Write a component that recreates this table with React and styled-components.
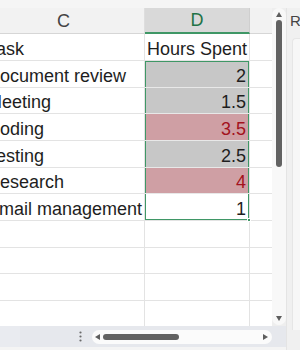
import React from "react";
import styled, { createGlobalStyle } from "styled-components";

const Global = createGlobalStyle`
  html, body { margin: 0; padding: 0; background: #ffffff; overflow: hidden; }
  * { box-sizing: border-box; }
`;

const FONT = `"Liberation Sans", Arial, sans-serif`;
const GRID = "#e3e3e3";
const GREEN = "#3f9766";

const Window = styled.div`
  width: 300px;
  height: 350px;
  display: flex;
  flex-direction: column;
  font-family: ${FONT};
  overflow: hidden;
  background: #f1f1f1;
`;

const TopStrip = styled.div`
  height: 8px;
  flex: none;
  background: #f5f5f5;
`;

const Body = styled.div`
  flex: 1;
  display: flex;
  min-height: 0;
`;

const Workspace = styled.div`
  width: 286px;
  flex: none;
  display: flex;
  flex-direction: column;
`;

const MainRow = styled.div`
  flex: 1;
  display: flex;
  min-height: 0;
`;

const Sheet = styled.div`
  width: 272px;
  flex: none;
  overflow: hidden;
  background: #ffffff;
`;

const Grid = styled.div`
  margin-left: -17px;
  display: grid;
  grid-template-columns: 162px 105px 120px;
  grid-auto-rows: auto;
`;

const HeaderCell = styled.div`
  height: 26px;
  display: flex;
  align-items: center;
  justify-content: center;
  font-size: 18px;
  line-height: 18px;
  color: ${(p) => (p.$active ? "#217346" : "#444444")};
  background: ${(p) => (p.$active ? "#d9d9d9" : "#f2f2f2")};
  border-right: 1px solid ${(p) => (p.$active ? "#cfcfcf" : "#dedede")};
  border-bottom: ${(p) => (p.$active ? `2px solid ${GREEN}` : "1px solid #d6d6d6")};
`;

const Cell = styled.div`
  position: relative;
  height: ${(p) => p.$h}px;
  display: flex;
  align-items: flex-end;
  justify-content: ${(p) => (p.$num ? "flex-end" : "flex-start")};
  padding: 0 3px 2px ${(p) => (p.$tight ? 2 : 4)}px;
  font-size: 18px;
  line-height: 18px;
  white-space: nowrap;
  color: ${(p) => (p.$red ? "#a3121d" : "#1e1e1e")};
  background: ${(p) => p.$fill || "#ffffff"};
  border-right: 1px solid ${GRID};
  border-bottom: 1px solid ${(p) => (p.$fill ? "#e8e8e8" : GRID)};
  box-shadow: ${(p) =>
    p.$sel
      ? [
          `inset 1px 0 0 ${GREEN}`,
          `inset -1px 0 0 ${GREEN}`,
          p.$selTop ? `inset 0 1px 0 ${GREEN}` : null,
          p.$selBottom ? `inset 0 -1px 0 ${GREEN}` : null,
        ]
          .filter(Boolean)
          .join(", ")
      : "none"};
`;

const FillHandle = styled.span`
  position: absolute;
  right: -2px;
  bottom: -2px;
  width: 4px;
  height: 4px;
  background: ${GREEN};
  border: 1px solid #ffffff;
  z-index: 2;
`;

const VScroll = styled.div`
  width: 14px;
  flex: none;
  background: #eeeeee;
  display: flex;
  padding-bottom: 1px;
`;

const VTrack = styled.div`
  flex: 1;
  background: #f8f8f8;
  border-radius: 7px;
  display: flex;
  flex-direction: column;
  align-items: center;
  padding: 4px 0 4px;
  gap: 3px;
`;

const VThumb = styled.div`
  width: 6px;
  height: 147px;
  border-radius: 3px;
  background: #626262;
`;

const Spacer = styled.div`
  flex: 1;
`;

const BottomBar = styled.div`
  height: 21px;
  flex: none;
  display: flex;
  align-items: center;
  background: #e6e8ed;
`;

const SheetStub = styled.div`
  width: 20px;
  height: 21px;
  background: #e9ebf0;
  flex: none;
`;

const Dots = styled.div`
  margin-left: 57px;
  width: 6px;
  display: flex;
  justify-content: center;
`;

const HTrack = styled.div`
  margin-left: 9px;
  width: 180px;
  height: 14px;
  border-radius: 7px;
  background: #fbfbfb;
  display: flex;
  align-items: center;
  padding: 0 4px 0 3px;
  gap: 3px;
`;

const HThumb = styled.div`
  width: 76px;
  height: 6px;
  border-radius: 3px;
  background: #626262;
`;

const BottomEdge = styled.div`
  height: 3px;
  flex: none;
  background: #f4f4f4;
`;

const SidePanel = styled.div`
  flex: 1;
  display: flex;
  flex-direction: column;
  background: #f0f0f0;
  border-left: 1px solid #e4e4e4;
  padding: 4px 0 20px 3px;
  overflow: hidden;
`;

const SideTitle = styled.div`
  font-size: 15px;
  line-height: 18px;
  color: #444444;
  height: 26px;
  white-space: nowrap;
`;

const SideBox = styled.div`
  flex: 1;
  margin-left: 2px;
  background: #f7f7f7;
  border-left: 1px solid #e6e6e6;
  border-top: 1px solid #e6e6e6;
  border-top-left-radius: 4px;
`;

const Arrow = ({ dir }) => {
  const pts = {
    up: "0,5 3,0 6,5",
    down: "0,0 6,0 3,5",
    left: "5,0 5,6 0,3",
    right: "0,0 0,6 5,3",
  }[dir];
  const horiz = dir === "left" || dir === "right";
  return (
    <svg width={horiz ? 5 : 6} height={horiz ? 6 : 5} viewBox={horiz ? "0 0 5 6" : "0 0 6 5"}>
      <polygon points={pts} fill="#5e5e5e" />
    </svg>
  );
};

const rows = [
  { task: "Task", hours: "Hours Spent", text: true },
  { task: "Document review", hours: "2", fill: "#c7c7c7" },
  { task: "Meeting", hours: "1.5", fill: "#c7c7c7" },
  { task: "Coding", hours: "3.5", fill: "#cf9fa4", red: true },
  { task: "Testing", hours: "2.5", fill: "#c7c7c7" },
  { task: "Research", hours: "4", fill: "#cf9fa4", red: true },
  { task: "Email management", hours: "1", active: true },
  {}, {}, {}, {}, {},
];

const heights = [27, 27, 26];

export default function App() {
  return (
    <>
      <Global />
      <Window>
        <TopStrip />
        <Body>
          <Workspace>
            <MainRow>
              <Sheet>
                <Grid>
                  <HeaderCell>C</HeaderCell>
                  <HeaderCell $active>D</HeaderCell>
                  <HeaderCell>E</HeaderCell>
                  {rows.map((r, i) => {
                    const h = heights[i % 3];
                    const sel = i >= 1 && i <= 6;
                    return (
                      <React.Fragment key={i}>
                        <Cell $h={h}>{r.task || ""}</Cell>
                        <Cell
                          $h={h}
                          $num={!r.text}
                          $tight={r.text}
                          $fill={r.fill}
                          $red={r.red}
                          $sel={sel}
                          $selTop={i === 1}
                          $selBottom={i === 6}
                        >
                          {r.hours || ""}
                          {r.active && <FillHandle />}
                        </Cell>
                        <Cell $h={h} />
                      </React.Fragment>
                    );
                  })}
                </Grid>
              </Sheet>
              <VScroll>
                <VTrack>
                  <Arrow dir="up" />
                  <VThumb />
                  <Spacer />
                  <Arrow dir="down" />
                </VTrack>
              </VScroll>
            </MainRow>
            <BottomBar>
              <SheetStub />
              <Dots>
                <svg width="3" height="11" viewBox="0 0 3 11">
                  <circle cx="1.5" cy="1.5" r="1.1" fill="#6a6a6a" />
                  <circle cx="1.5" cy="5.5" r="1.1" fill="#6a6a6a" />
                  <circle cx="1.5" cy="9.5" r="1.1" fill="#6a6a6a" />
                </svg>
              </Dots>
              <HTrack>
                <Arrow dir="left" />
                <HThumb />
                <Spacer />
                <Arrow dir="right" />
              </HTrack>
            </BottomBar>
            <BottomEdge />
          </Workspace>
          <SidePanel>
            <SideTitle>R</SideTitle>
            <SideBox />
          </SidePanel>
        </Body>
      </Window>
    </>
  );
}
